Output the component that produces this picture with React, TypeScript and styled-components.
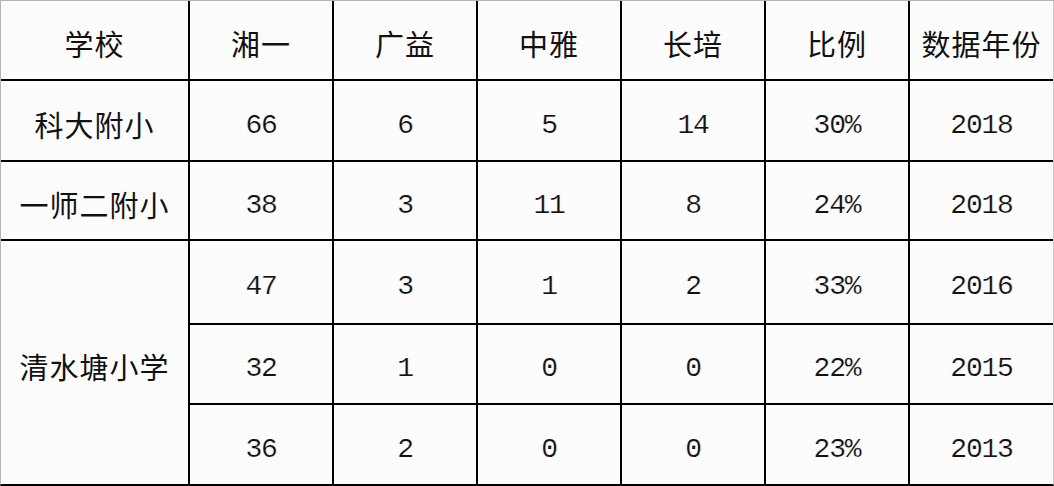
import React from "react";
import styled, { createGlobalStyle } from "styled-components";

const GlobalStyle = createGlobalStyle`
  html, body {
    margin: 0;
    padding: 0;
    background: #fdfcfd;
  }
`;

type Row = { school?: string; span?: number; values: string[] };

const headers = ["学校", "湘一", "广益", "中雅", "长培", "比例", "数据年份"];

const rows: Row[] = [
  { school: "科大附小", values: ["66", "6", "5", "14", "30%", "2018"] },
  { school: "一师二附小", values: ["38", "3", "11", "8", "24%", "2018"] },
  { school: "清水塘小学", span: 3, values: ["47", "3", "1", "2", "33%", "2016"] },
  { values: ["32", "1", "0", "0", "22%", "2015"] },
  { values: ["36", "2", "0", "0", "23%", "2013"] },
];

const Table = styled.div`
  width: 1054px;
  height: 486px;
  box-sizing: border-box;
  display: grid;
  grid-template-columns: 187px repeat(5, 142px) 143px;
  grid-template-rows: 78px 79px 77px 82px 78px 79px;
  gap: 2px;
  background: #000;
  border-left: 1px solid #b4b4b4;
  border-top: 1px solid #b4b4b4;
  border-right: 1px solid #c8c8c8;
  border-bottom: 2px solid #000;
`;

const Cell = styled.div<{ $num?: boolean; $span?: number }>`
  background: #fdfcfd;
  display: flex;
  align-items: center;
  justify-content: center;
  padding-top: ${(p) => (p.$num ? "9px" : "6px")};
  box-sizing: border-box;
  color: #111;
  white-space: nowrap;
  font-family: ${(p) =>
    p.$num
      ? `"Liberation Mono", "Noto Sans CJK SC", monospace`
      : `"Noto Sans CJK SC", "Noto Sans", sans-serif`};
  font-size: ${(p) => (p.$num ? "28px" : "29px")};
  letter-spacing: ${(p) => (p.$num ? "-1.2px" : "1px")};
  -webkit-text-stroke: ${(p) => (p.$num ? "0.2px #fdfcfd" : "0")};
  grid-row: ${(p) => (p.$span ? `span ${p.$span}` : "auto")};
`;

export default function App() {
  return (
    <>
      <GlobalStyle />
      <Table>
        {headers.map((h) => (
          <Cell key={h}>{h}</Cell>
        ))}
        {rows.map((r, i) => (
          <React.Fragment key={i}>
            {r.school && <Cell $span={r.span}>{r.school}</Cell>}
            {r.values.map((v, j) => (
              <Cell key={j} $num>
                {v}
              </Cell>
            ))}
          </React.Fragment>
        ))}
      </Table>
    </>
  );
}
